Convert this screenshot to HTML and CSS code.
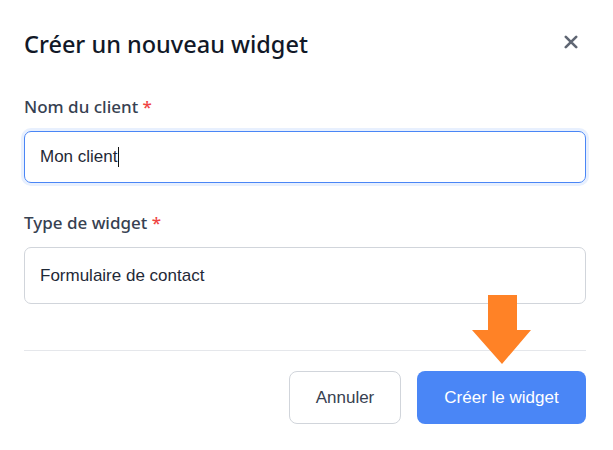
FILE: index.html
```html
<!DOCTYPE html>
<html lang="fr">
<head>
  <meta charset="UTF-8" />
  <meta name="viewport" content="width=device-width, initial-scale=1" />
  <title>Créer un nouveau widget</title>
  <link rel="stylesheet" href="styles.css">
</head>
<body>

  <div class="modal">
    <div class="modal-header">
      <h2>Créer un nouveau widget</h2>
      <svg class="close" width="14" height="14" viewBox="0 0 14 14">
        <path d="M1.8 1.8 L12.2 12.2 M12.2 1.8 L1.8 12.2" stroke="#5f6673" stroke-width="2.6" stroke-linecap="round" />
      </svg>
    </div>

    <div class="field">
      <label>Nom du client <span class="req">*</span></label>
      <div class="input focused">Mon client<span class="caret"></span></div>
    </div>

    <div class="field">
      <label>Type de widget <span class="req">*</span></label>
      <div class="input select">Formulaire de contact</div>
    </div>

    <div class="modal-footer">
      <button class="btn btn-cancel">Annuler</button>
      <button class="btn btn-primary">Créer le widget</button>
    </div>

    <!-- pointer arrow over the submit button -->
    <svg class="arrow" width="59" height="69" viewBox="0 0 59 69">
      <polygon points="16,0 45,0 45,35 59,35 30,69 0,35 16,35" fill="#ff8226" />
    </svg>
  </div>

</body>
</html>
```

FILE: styles.css
```css
body {
  margin: 0;
  padding: 0;
  background: #ffffff;
  font-family: 'Noto Sans', 'Liberation Sans', sans-serif;
  color: #111827;
}

.modal {
  position: relative;
  padding: 24px 27px 24px 24px;
}

.modal-header {
  display: flex;
  align-items: center;
  justify-content: space-between;
  height: 40px;
  margin-bottom: 31px;
}

.modal-header h2 {
  margin: 0;
  font-size: 23.5px;
  font-weight: 500;
  color: #111827;
}

.close {
  margin-right: 8px;
  margin-bottom: 4px;
}

.field {
  margin-bottom: 28px;
}

.field label {
  display: block;
  font-size: 17px;
  font-weight: 500;
  line-height: 24px;
  color: #374151;
  margin-bottom: 12px;
}

.req {
  color: #ef4444;
}

.input {
  box-sizing: border-box;
  height: 52px;
  display: flex;
  align-items: center;
  padding: 0 15px;
  border: 1px solid #d1d5db;
  border-radius: 7px;
  font-family: 'Liberation Sans', Arial, sans-serif;
  font-size: 17px;
  color: #1f2937;
}

.input.focused {
  border-color: #4a86f6;
  box-shadow: 0 0 0 3px #e8f0fe;
}

.input.select {
  height: 57px;
}

.caret {
  display: inline-block;
  width: 1px;
  height: 20px;
  background: #111;
  margin-left: 1px;
}

.modal-footer {
  border-top: 1px solid #e5e7eb;
  margin-top: 46px;
  padding-top: 20px;
  display: flex;
  justify-content: flex-end;
  gap: 16px;
}

.btn {
  height: 53px;
  border-radius: 8px;
  font-family: 'Liberation Sans', Arial, sans-serif;
  font-size: 17px;
  cursor: pointer;
}

.btn-cancel {
  width: 112px;
  background: #ffffff;
  border: 1px solid #d1d5db;
  color: #374151;
}

.btn-primary {
  width: 169px;
  background: #4a86f6;
  border: none;
  color: #ffffff;
}

.arrow {
  position: absolute;
  left: 472px;
  top: 295px;
}
```
